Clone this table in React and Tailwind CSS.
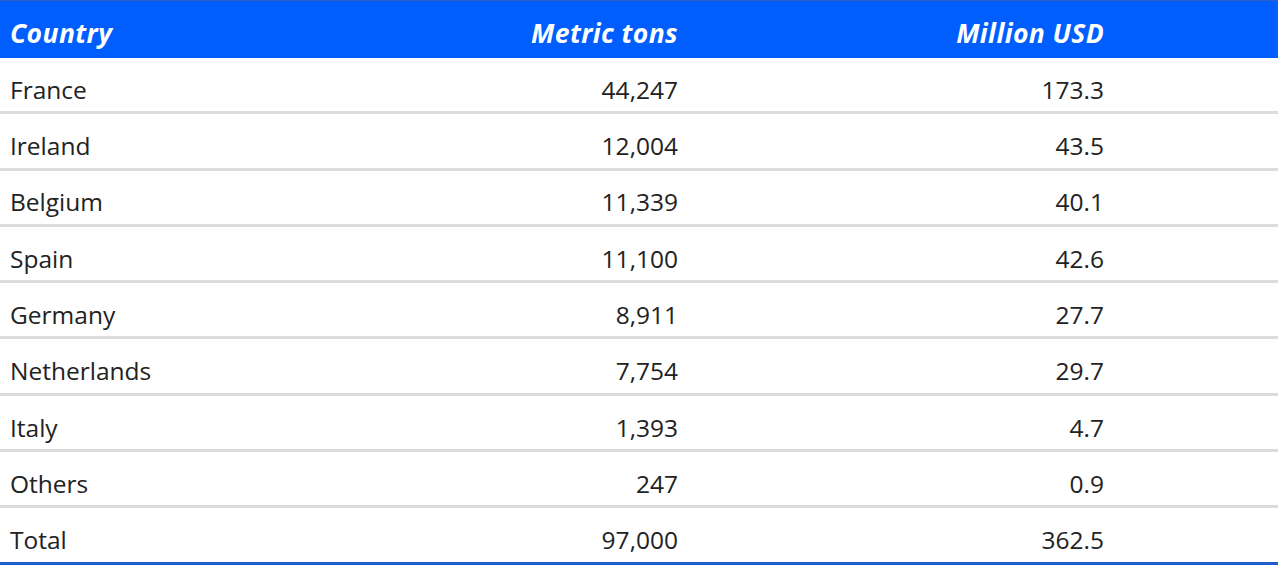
export default function App() {
  const rows = [
    ["France", "44,247", "173.3"],
    ["Ireland", "12,004", "43.5"],
    ["Belgium", "11,339", "40.1"],
    ["Spain", "11,100", "42.6"],
    ["Germany", "8,911", "27.7"],
    ["Netherlands", "7,754", "29.7"],
    ["Italy", "1,393", "4.7"],
    ["Others", "247", "0.9"],
    ["Total", "97,000", "362.5"],
  ];
  return (
    <div className="w-[1278px] bg-white" style={{ fontFamily: '"Open Sans", "Noto Sans", sans-serif' }}>
      <div className="grid grid-cols-[440px_238px_426px_174px] h-[58px] pt-[8px] items-center bg-[#005eff] border-t border-r border-[#2d5fc4] text-white font-bold italic text-[26.5px] tracking-[0.4px]">
        <div className="pl-[10px]">Country</div>
        <div className="text-right">Metric tons</div>
        <div className="text-right">Million USD</div>
        <div />
      </div>
      {rows.map((r, i) => (
        <div
          key={r[0]}
          className={`grid grid-cols-[440px_238px_426px_174px] h-[56.3px] pt-[11px] items-center text-[24.5px] text-[#222] border-b-[3px] ${i === rows.length - 1 ? "border-[#1f5ccc]" : "border-[#dcdcdc]"}`}
        >
          <div className="pl-[10px]">{r[0]}</div>
          <div className="text-right">{r[1]}</div>
          <div className="text-right">{r[2]}</div>
          <div />
        </div>
      ))}
    </div>
  );
}
